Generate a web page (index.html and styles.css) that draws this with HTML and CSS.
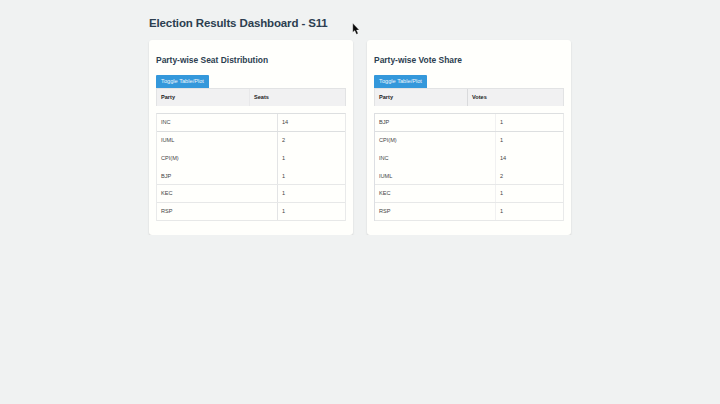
FILE: index.html
```html
<!DOCTYPE html>
<html lang="en">
<head>
<meta charset="utf-8">
<title>Election Results Dashboard - S11</title>
<link rel="stylesheet" href="styles.css">
</head>
<body>
<main class="page">
  <h1>Election Results Dashboard - S11</h1>
  <div class="cards">
    <section class="card seats">
      <h2>Party-wise Seat Distribution</h2>
      <button type="button" class="toggle">Toggle Table/Plot</button>
      <div class="head"><div>Party</div><div>Seats</div></div>
      <div class="rows">
        <div class="row ruled"><span>INC</span><span>14</span></div>
        <div class="row"><span>IUML</span><span>2</span></div>
        <div class="row"><span>CPI(M)</span><span>1</span></div>
        <div class="row light short"><span>BJP</span><span>1</span></div>
        <div class="row light"><span>KEC</span><span>1</span></div>
        <div class="row light"><span>RSP</span><span>1</span></div>
      </div>
    </section>
    <section class="card votes">
      <h2>Party-wise Vote Share</h2>
      <button type="button" class="toggle">Toggle Table/Plot</button>
      <div class="head"><div>Party</div><div>Votes</div></div>
      <div class="rows">
        <div class="row ruled"><span>BJP</span><span>1</span></div>
        <div class="row"><span>CPI(M)</span><span>1</span></div>
        <div class="row"><span>INC</span><span>14</span></div>
        <div class="row light short"><span>IUML</span><span>2</span></div>
        <div class="row light"><span>KEC</span><span>1</span></div>
        <div class="row light"><span>RSP</span><span>1</span></div>
      </div>
    </section>
  </div>
</main>
<svg class="cursor" width="8" height="12" viewBox="0 0 8 12"><path d="M.8 .3V9.2L2.8 7.6L4.4 11.2L6.1 10.4L4.5 7H7.2Z" fill="#080808" stroke="#fff" stroke-width=".3"/></svg>
</body>
</html>
```
FILE: styles.css
```css
* { box-sizing: border-box; }

body {
  margin: 0;
  background: #f0f2f2;
  color: #444;
  font-family: "Liberation Sans", Arial, sans-serif;
  font-size: 5.6px;
}

.page { width: 422px; margin: 0 auto; padding-top: 16px; }

h1 {
  margin: 0 0 9px;
  font-size: 11.5px;
  letter-spacing: -.13px;
  line-height: 15px;
  color: #2c3e50;
  white-space: nowrap;
}

.cards { display: grid; grid-template-columns: 204px 204px; gap: 14px; }

.card {
  height: 195px;
  padding: 14px 7px 0;
  border-radius: 3px;
  background: #fffffc;
  box-shadow: 0 1px 2px rgba(0, 0, 0, .14);
}

h2 {
  margin: 0 0 8px;
  font-size: 8.45px;
  line-height: 13px;
  color: #2c3e50;
  white-space: nowrap;
}

.toggle {
  display: block;
  width: 53px;
  height: 13px;
  padding: 0;
  border: 0;
  border-radius: 1px 1px 0 0;
  background: #3498db;
  color: #eef6fc;
  font: 5.65px/13px "Liberation Sans", Arial, sans-serif;
  text-align: center;
  white-space: nowrap;
}

.head {
  display: grid;
  grid-template-columns: 92px 1fr;
  width: 190px;
  height: 18px;
  border: solid #e2e3e4;
  border-width: 1px 1px 0;
  background: #f1f1f2;
  color: #222;
  font-weight: bold;
  line-height: 17px;
}

.head div { padding-left: 4px; }
.head div + div { border-left: 1px solid #e8e8ea; }
.votes .head div + div { border-left-color: #d9dadc; }

.rows {
  width: 190px;
  margin-top: 7px;
  border: solid #e9eaea;
  border-width: 1px 1px 0;
  border-top-color: #dddfe0;
}

.votes .rows { border-left-color: #dddfe3; }

.row {
  display: grid;
  grid-template-columns: 120px 1fr;
  height: 18px;
  line-height: 16px;
}

.row span { padding-left: 4px; }
.row span + span { border-left: 1px solid #e3e4e5; }
.votes .row span + span { border-left-color: #f1f1f1; }
.row.ruled { border-bottom: 1px solid #dddfe0; }
.row.light { border-bottom: 1px solid #e7e8e8; }
.row.short { height: 17px; }

.cursor { position: absolute; left: 352px; top: 23px; }
```
